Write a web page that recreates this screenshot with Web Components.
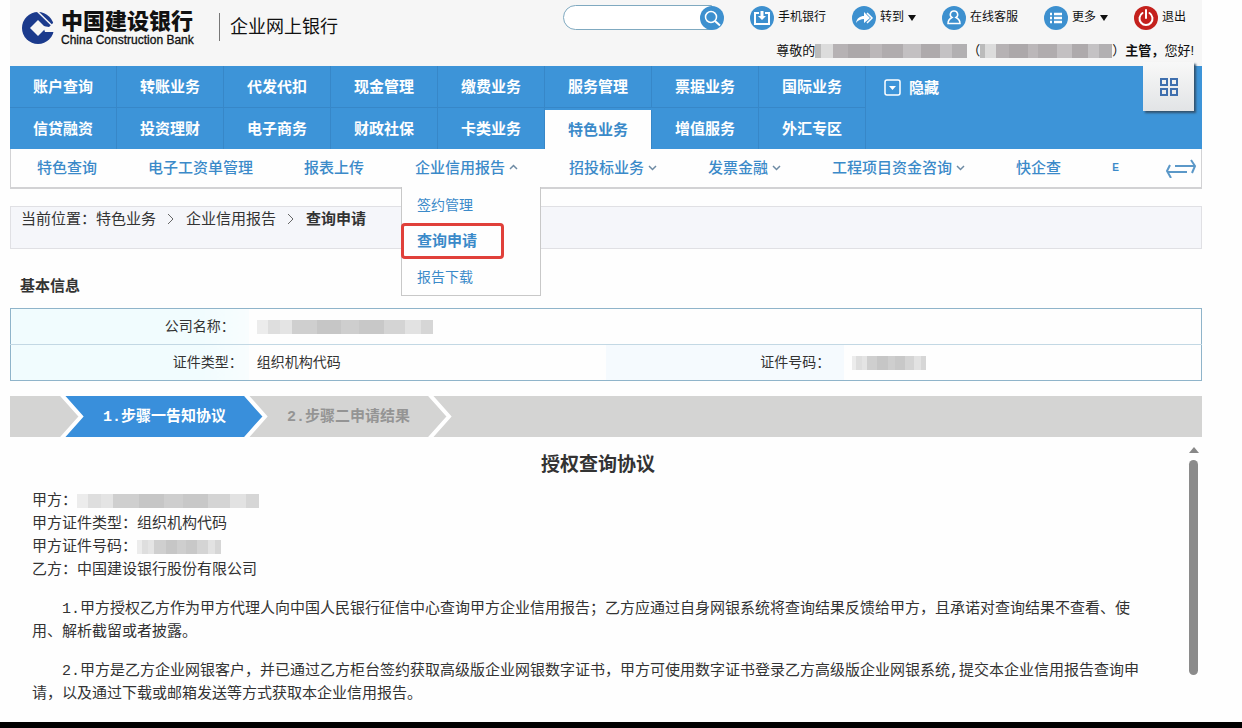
<!DOCTYPE html>
<html lang="zh-CN">
<head>
<meta charset="utf-8">
<meta name="viewport" content="width=device-width, initial-scale=1">
<title>企业网上银行</title>
<style>
  * { box-sizing: border-box; }

  body {
    --blue: #3d94d8;
    --link: #3b8ac9;
    --line: #d2d2d4;

    margin: 0;
    height: 100vh;
    display: flex;
    flex-direction: column;
    background: #fefefe;
    color: #333;
    font: 15px/23px "Liberation Sans", "Noto Sans CJK SC", sans-serif;
    border-bottom: 6px solid #000;
    overflow: hidden;
  }

  main {
    flex: 1;
    min-height: 0;
    display: flex;
    flex-direction: column;
    margin: 0 40px 0 10px;
  }

  h2 {
    margin: 25px 0 10px;
    padding-left: 10px;
    font-size: 15px;
    line-height: 24px;
  }
</style>
</head>
<body>
  <main>
    <bank-header>
      <top-link icon="phone">手机银行</top-link>
      <top-link icon="goto" menu>转到</top-link>
      <top-link icon="service">在线客服</top-link>
      <top-link icon="more" menu>更多</top-link>
      <top-link icon="power">退出</top-link>
    </bank-header>
    <main-nav></main-nav>
    <sub-nav>
      <sub-item>特色查询</sub-item>
      <sub-item>电子工资单管理</sub-item>
      <sub-item>报表上传</sub-item>
      <sub-item caret="up">企业信用报告
        <drop-menu slot="menu"></drop-menu>
      </sub-item>
      <sub-item caret="down">招投标业务</sub-item>
      <sub-item caret="down">发票金融</sub-item>
      <sub-item caret="down">工程项目资金咨询</sub-item>
      <sub-item>快企查</sub-item>
      <sub-item small>E</sub-item>
    </sub-nav>
    <crumb-trail></crumb-trail>
    <h2>基本信息</h2>
    <info-table></info-table>
    <step-bar></step-bar>
    <agreement-panel></agreement-panel>
  </main>

<script>
const ICONS = {
  phone: `<circle cx="12" cy="12" r="12" fill="#3d90cf"/>
    <path d="M9 7H5v11h14V7h-4" fill="none" stroke="#fff" stroke-width="2"/>
    <path d="M10.500 5h3v5H16l-4 4-4-4h2.500z" fill="#fff"/>`,
  goto: `<circle cx="12" cy="12" r="12" fill="#3d90cf"/>
    <path d="M4 17c1-5 4-7 8-7V6l6 6-6 5v-4c-3 0-6 1-8 4z" fill="#fff"/>
    <path d="M15 7l5 5-5 5" fill="none" stroke="#fff" stroke-width="1.500"/>`,
  service: `<circle cx="12" cy="12" r="12" fill="#3d90cf"/>
    <path d="M12 5a3.500 3.500 0 0 0-2 6.500c-2 1-4 2.500-4 6h12c0-3.500-2-5-4-6A3.500 3.500 0 0 0 12 5z" fill="none" stroke="#fff" stroke-width="1.500"/>`,
  more: `<circle cx="12" cy="12" r="12" fill="#3d90cf"/>
    <path d="M6 8h2M6 12h2M6 16h2M10 8h8M10 12h8M10 16h8" stroke="#fff" stroke-width="2.500"/>`,
  power: `<circle cx="12" cy="12" r="12" fill="#c4211d"/>
    <path d="M8.500 7a6.500 6.500 0 1 0 7 0M12 4v8" fill="none" stroke="#fff" stroke-width="2" stroke-linecap="round"/>`,
  search: `<circle cx="12" cy="12" r="12" fill="#3d90cf"/>
    <circle cx="11" cy="11" r="5.500" fill="none" stroke="#fff" stroke-width="1.500"/>
    <path d="M15 15l5 4.500" stroke="#fff" stroke-width="2"/>`
};

class AppIcon extends HTMLElement {
  constructor() {
    super();
    this.attachShadow({ mode: "open" });
  }

  connectedCallback() {
    this.shadowRoot.innerHTML = /* html */`
    <style>
      :host { display: block; flex: none; width: 24px; height: 24px; }
      svg { display: block; }
    </style>
    <svg width="24" height="24" viewBox="0 0 24 24">${ICONS[this.getAttribute("name")]}</svg>`;
  }
}

/* Greyed out private data */
class MaskedValue extends HTMLElement {
  constructor() {
    super();
    this.attachShadow({ mode: "open" });
  }

  connectedCallback() {
    this.shadowRoot.innerHTML = /* html */`
    <style>
      :host {
        display: inline-block;
        width: var(--mask-width, 100px);
        height: 14px;
        vertical-align: middle;
        background: linear-gradient(90deg, #ececec 0 6%, #dedede 6% 13%, #e4e4e4 13% 20%,
          #cfcfcf 20% 34%, #c6c6c6 34% 48%, #cecece 48% 58%, #c8c8c8 58% 72%,
          #d4d4d4 72% 84%, #e2e2e2 84% 93%, #d6d6d6 93%);
      }
      :host([dark]) {
        background: linear-gradient(90deg, #bbb 0 4%, #dcdcdc 4% 12%, #b6b2b4 12% 22%,
          #aca8aa 22% 36%, #bbb7b9 36% 44%, #b0acae 44% 58%, #c3c0c2 58% 70%,
          #aeaaac 70% 82%, #c4c2c4 82% 90%, #b2b0b2 90%);
      }
    </style>`;
  }
}

class TopLink extends HTMLElement {
  constructor() {
    super();
    this.attachShadow({ mode: "open" });
  }

  connectedCallback() {
    this.shadowRoot.innerHTML = /* html */`
    <style>
      :host { display: block; }
      a {
        display: flex;
        align-items: center;
        gap: 4px;
        color: #111;
        text-decoration: none;
        white-space: nowrap;
      }
      i {
        border: 4px solid transparent;
        border-top: 6px solid #111;
        border-bottom: 0;
      }
    </style>
    <a href="#"><app-icon name="${this.getAttribute("icon")}"></app-icon><slot></slot>${this.hasAttribute("menu") ? "<i></i>" : ""}</a>`;
  }
}

class BankHeader extends HTMLElement {
  constructor() {
    super();
    this.attachShadow({ mode: "open" });
  }

  static get styles() {
    return /* css */`
      :host {
        display: flex;
        justify-content: space-between;
        height: 66px;
        flex: none;
        padding: 0 8px 0 11px;
        background: #f6f6f6;
        color: #111;
      }

      .brand {
        display: flex;
        align-items: flex-start;
        padding-top: 11px;
      }

      .logo { display: block; margin-right: 6px; }

      .name {
        display: flex;
        flex-direction: column;
        width: 152px;
        white-space: nowrap;
      }

      .name strong {
        font-size: 22px;
        line-height: 22px;
        font-weight: 900;
      }

      .name small {
        font-size: 12px;
        line-height: 14px;
        -webkit-text-stroke: 0.3px;
      }

      .product {
        margin-left: 6px;
        margin-top: 2px;
        padding-left: 10px;
        border-left: 1px solid #777;
        font-size: 18px;
        line-height: 28px;
        white-space: nowrap;
      }

      .tools {
        display: flex;
        flex-direction: column;
        align-items: flex-end;
        gap: 9px;
        padding-top: 5px;
        font-size: 12px;
      }

      .links {
        display: flex;
        align-items: center;
        gap: 26px;
        padding-right: 8px;
      }

      form { display: flex; margin: 0; }

      input {
        width: 149px;
        height: 25px;
        margin-right: -12px;
        box-sizing: border-box;
        border: 1px solid #7fa9c0;
        border-radius: 13px 0 0 13px;
        background: #fff;
        padding: 0 10px;
        outline: 0;
      }

      button {
        padding: 0;
        border: 0;
        background: none;
        border-radius: 12px;
      }

      .greeting {
        display: flex;
        align-items: center;
        font-size: 13px;
        line-height: 24px;
        white-space: nowrap;
      }

      .who { --mask-width: 152px; }
      .role { --mask-width: 132px; }
    `;
  }

  connectedCallback() {
    this.shadowRoot.innerHTML = /* html */`
    <style>${BankHeader.styles}</style>
    <div class="brand">
      <svg class="logo" width="34" height="34" viewBox="0 0 34 34">
        <circle cx="17" cy="17" r="16" fill="#1b3a8c"/>
        <path d="M17 9l8 8-8 8-8-8z" fill="#f6f6f6"/>
        <path d="M22 15l6 1 6-6v11H24z" fill="#f6f6f6"/>
        <path d="M16 0l15 14.500" fill="none" stroke="#f6f6f6" stroke-width="1.500"/>
      </svg>
      <div class="name"><strong>中国建设银行</strong><small>China Construction Bank</small></div>
      <div class="product">企业网上银行</div>
    </div>
    <div class="tools">
      <div class="links">
        <form>
          <input type="text" aria-label="搜索">
          <button type="button" aria-label="搜索"><app-icon name="search"></app-icon></button>
        </form>
        <slot></slot>
      </div>
      <div class="greeting">尊敬的<masked-value class="who" dark></masked-value>（<masked-value class="role" dark></masked-value>）<b>主管，</b>您好!</div>
    </div>`;
  }
}

class MainNav extends HTMLElement {
  constructor() {
    super();
    this.attachShadow({ mode: "open" });
  }

  static get styles() {
    return /* css */`
      :host {
        display: block;
        flex: none;
        position: relative;
        background: var(--blue);
      }

      nav {
        display: grid;
        grid-template-columns: repeat(8, 107px) 1fr;
        grid-template-rows: 42px 41px;
        font-weight: bold;
      }

      a {
        display: flex;
        align-items: center;
        justify-content: center;
        color: #fff;
        text-decoration: none;
        border-right: 1px solid #3787c8;
        border-bottom: 1px solid #3787c8;
      }

      a:nth-child(n + 10) { border-bottom: 0; }

      a.active {
        margin-top: 2px;
        background: #fefefe;
        color: var(--link);
      }

      .hide {
        justify-content: flex-start;
        gap: 8px;
        padding-left: 18px;
        border: 0;
      }

      .apps {
        position: absolute;
        right: 8px;
        top: -4px;
        width: 51px;
        height: 49px;
        padding: 0;
        border: 0;
        background: linear-gradient(#f8f8f8, #e2e4e6);
        box-shadow: 2px 2px 2px #33536e;
      }

      .apps svg { display: block; margin: auto; }
    `;
  }

  link(text) {
    return `<a href="#"${text === "特色业务" ? ' class="active"' : ""}>${text}</a>`;
  }

  connectedCallback() {
    const first = ["账户查询", "转账业务", "代发代扣", "现金管理", "缴费业务", "服务管理", "票据业务", "国际业务"];
    const second = ["信贷融资", "投资理财", "电子商务", "财政社保", "卡类业务", "特色业务", "增值服务", "外汇专区"];
    this.shadowRoot.innerHTML = /* html */`
    <style>${MainNav.styles}</style>
    <nav>
      ${first.map(this.link).join("")}
      <a class="hide" href="#">
        <svg width="17" height="17" viewBox="0 0 17 17">
          <rect x="1" y="1" width="15" height="15" rx="2" fill="none" stroke="#fff" stroke-width="1.500"/>
          <path d="M5 7h7l-3.500 4z" fill="#fff"/>
        </svg>隐藏</a>
      ${second.map(this.link).join("")}
    </nav>
    <button class="apps" type="button" aria-label="应用">
      <svg width="20" height="20" viewBox="0 0 20 20" fill="none" stroke="#3f6fae" stroke-width="2">
        <path d="M2 2h6v6H2zM12 2h6v6h-6zM2 12h6v6H2zM12 12h6v6h-6z"/>
      </svg>
    </button>`;
  }
}

class SubNav extends HTMLElement {
  constructor() {
    super();
    this.attachShadow({ mode: "open" });
  }

  connectedCallback() {
    this.shadowRoot.innerHTML = /* html */`
    <style>
      :host {
        display: flex;
        align-items: center;
        justify-content: space-between;
        height: 40px;
        flex: none;
        box-sizing: border-box;
        padding: 0 4px 2px 26px;
        border: solid var(--line);
        border-width: 0 1px 2px;
      }
      nav {
        display: flex;
        align-items: center;
        gap: 51px;
      }
      button {
        padding: 0;
        border: 0;
        background: none;
      }
      svg { display: block; }
    </style>
    <nav><slot></slot></nav>
    <button type="button" aria-label="切换">
      <svg width="32" height="22" viewBox="0 0 32 22" fill="none" stroke="#5b98c8" stroke-width="2">
        <path d="M10 10h20M26 4l4 6-3 7M22 16H2M5 9l-3 6 4 7"/>
      </svg>
    </button>`;
  }
}

class SubItem extends HTMLElement {
  constructor() {
    super();
    this.attachShadow({ mode: "open" });
  }

  connectedCallback() {
    const caret = this.getAttribute("caret");
    const d = caret === "up" ? "M1 6l3.500-3.500L8 6" : "M1 3l3.500 3.500L8 3";
    this.shadowRoot.innerHTML = /* html */`
    <style>
      :host { display: block; position: relative; }
      a {
        display: flex;
        align-items: center;
        gap: 4px;
        color: var(--link);
        font-weight: 500;
        text-decoration: none;
        white-space: nowrap;
      }
      :host([small]) a { font-size: 10px; font-weight: bold; }
    </style>
    <a href="#"><slot></slot>${caret ? `<svg width="9" height="9" viewBox="0 0 9 9"><path d="${d}" fill="none" stroke="#6d8aa3" stroke-width="1.500"/></svg>` : ""}</a>
    <slot name="menu"></slot>`;
  }
}

class DropMenu extends HTMLElement {
  constructor() {
    super();
    this.attachShadow({ mode: "open" });
  }

  connectedCallback() {
    this.shadowRoot.innerHTML = /* html */`
    <style>
      :host {
        display: block;
        position: absolute;
        z-index: 1;
        left: -14px;
        top: 31px;
        width: 140px;
        box-sizing: border-box;
        border: solid #c8c8c8;
        border-width: 0 1px 1px;
        background: #fefefe;
        font-size: 14px;
      }
      a {
        display: block;
        box-sizing: border-box;
        height: 36px;
        padding-left: 15px;
        line-height: 36px;
        color: var(--link);
        text-decoration: none;
      }
      a.active {
        width: 103px;
        margin-left: -1px;
        padding-left: 13px;
        border: 3px solid #e0403a;
        border-radius: 4px;
        line-height: 30px;
        font-size: 15px;
        font-weight: bold;
      }
    </style>
    <a href="#">签约管理</a>
    <a href="#" class="active">查询申请</a>
    <a href="#">报告下载</a>`;
  }
}

class CrumbTrail extends HTMLElement {
  constructor() {
    super();
    this.attachShadow({ mode: "open" });
  }

  connectedCallback() {
    const sep = `<svg width="8" height="12" viewBox="0 0 8 12"><path d="M1 1l5 5-5 5" fill="none" stroke="#666"/></svg>`;
    this.shadowRoot.innerHTML = /* html */`
    <style>
      :host {
        display: flex;
        align-items: flex-start;
        flex: none;
        box-sizing: border-box;
        height: 43px;
        margin-top: 17px;
        padding-left: 10px;
        border: 1px solid #e0e0e4;
        background: #f5f6fa;
      }
      nav { display: flex; align-items: center; gap: 11px; }
      a { color: inherit; text-decoration: none; }
    </style>
    <nav><span>当前位置：<a href="#">特色业务</a></span>${sep}<a href="#">企业信用报告</a>${sep}<b>查询申请</b></nav>`;
  }
}

class InfoTable extends HTMLElement {
  constructor() {
    super();
    this.attachShadow({ mode: "open" });
  }

  connectedCallback() {
    this.shadowRoot.innerHTML = /* html */`
    <style>
      :host { display: block; flex: none; font-size: 14px; }
      table {
        width: 100%;
        table-layout: fixed;
        border-collapse: collapse;
        border: 1px solid #8fb4ca;
      }
      tr + tr { border-top: 1px solid #c3d8e4; }
      th, td { height: 36px; padding: 0 8px; box-sizing: border-box; text-align: left; }
      th {
        padding-right: 14px;
        text-align: right;
        font-weight: normal;
        background: linear-gradient(90deg, #f1fcfe 80%, #f8fdfe);
      }
      th.near { padding-right: 6px; }
      td + th { background: #f5fafe; }
      .company { --mask-width: 176px; }
      .number { --mask-width: 74px; }
    </style>
    <table>
      <colgroup><col style="width: 20%"><col style="width: 30%"><col style="width: 20%"><col style="width: 30%"></colgroup>
      <tr>
        <th scope="row">公司名称：</th>
        <td colspan="3"><masked-value class="company"></masked-value></td>
      </tr>
      <tr>
        <th scope="row" class="near">证件类型：</th>
        <td>组织机构代码</td>
        <th scope="row">证件号码：</th>
        <td><masked-value class="number"></masked-value></td>
      </tr>
    </table>`;
  }
}

class StepBar extends HTMLElement {
  constructor() {
    super();
    this.attachShadow({ mode: "open" });
  }

  /* Arrow head in the colour of the step before, on the colour of the next */
  arrow(from, to) {
    return `<svg width="24" height="41" viewBox="0 0 24 41">
      <path d="M0 0h24v41H0z" fill="${to}"/>
      <path d="M0 0h3l18 20.500L3 41H0z" fill="${from}"/>
      <path d="M1 -2l20 22.500L1 43" fill="none" stroke="#fff" stroke-width="4"/>
    </svg>`;
  }

  connectedCallback() {
    const grey = "#d4d4d3";
    const blue = "#398fdb";
    this.shadowRoot.innerHTML = /* html */`
    <style>
      :host {
        display: block;
        flex: none;
        margin-top: 15px;
        background: ${grey};
        font-family: "Liberation Mono", "Noto Sans CJK SC", monospace;
        font-weight: bold;
      }
      ol {
        display: flex;
        margin: 0;
        padding: 0 0 0 50px;
        list-style: none;
        height: 41px;
        line-height: 43px;
        overflow: hidden;
      }
      li { padding: 0 18px 0 19px; color: #949494; }
      li.current { background: ${blue}; color: #fff; }
      svg { display: block; flex: none; }
    </style>
    <ol>
      ${this.arrow(grey, blue)}
      <li class="current">1.步骤一告知协议</li>
      ${this.arrow(blue, grey)}
      <li>2.步骤二申请结果</li>
      ${this.arrow(grey, grey)}
    </ol>`;
  }
}

class AgreementPanel extends HTMLElement {
  constructor() {
    super();
    this.attachShadow({ mode: "open" });
  }

  static get styles() {
    return /* css */`
      :host {
        display: flex;
        flex: 1;
        min-height: 0;
        font-family: "Liberation Mono", "Noto Sans CJK SC", monospace;
      }

      article {
        flex: 1;
        padding: 14px 43px 0 22px;
        overflow: hidden;
      }

      h1 {
        margin: 0 0 15px;
        padding-left: 22px;
        text-align: center;
        font: bold 19px/24px "Noto Sans CJK SC", sans-serif;
      }

      p { margin: 0 0 16px; }
      p.clause { text-indent: 2em; }

      .party { --mask-width: 182px; }
      .number { --mask-width: 84px; }

      .scroll {
        width: 17px;
        display: flex;
        flex-direction: column;
        align-items: center;
        gap: 7px;
        padding-top: 10px;
      }

      .up {
        border: 5px solid transparent;
        border-bottom: 6px solid #888;
        border-top: 0;
      }

      .thumb {
        width: 9px;
        height: 78%;
        border-radius: 5px;
        background: #8b8b8b;
      }
    `;
  }

  connectedCallback() {
    this.shadowRoot.innerHTML = /* html */`
    <style>${AgreementPanel.styles}</style>
    <article>
      <h1>授权查询协议</h1>
      <p>甲方：<masked-value class="party"></masked-value><br>
      甲方证件类型：组织机构代码<br>
      甲方证件号码：<masked-value class="number"></masked-value><br>
      乙方：中国建设银行股份有限公司</p>
      <p class="clause">1.甲方授权乙方作为甲方代理人向中国人民银行征信中心查询甲方企业信用报告；乙方应通过自身网银系统将查询结果反馈给甲方，且承诺对查询结果不查看、使用、解析截留或者披露。</p>
      <p class="clause">2.甲方是乙方企业网银客户，并已通过乙方柜台签约获取高级版企业网银数字证书，甲方可使用数字证书登录乙方高级版企业网银系统,提交本企业信用报告查询申请，以及通过下载或邮箱发送等方式获取本企业信用报告。</p>
    </article>
    <div class="scroll"><span class="up"></span><span class="thumb"></span></div>`;
  }
}

customElements.define("app-icon", AppIcon);
customElements.define("masked-value", MaskedValue);
customElements.define("top-link", TopLink);
customElements.define("bank-header", BankHeader);
customElements.define("main-nav", MainNav);
customElements.define("sub-nav", SubNav);
customElements.define("sub-item", SubItem);
customElements.define("drop-menu", DropMenu);
customElements.define("crumb-trail", CrumbTrail);
customElements.define("info-table", InfoTable);
customElements.define("step-bar", StepBar);
customElements.define("agreement-panel", AgreementPanel);
</script>
</body>
</html>
